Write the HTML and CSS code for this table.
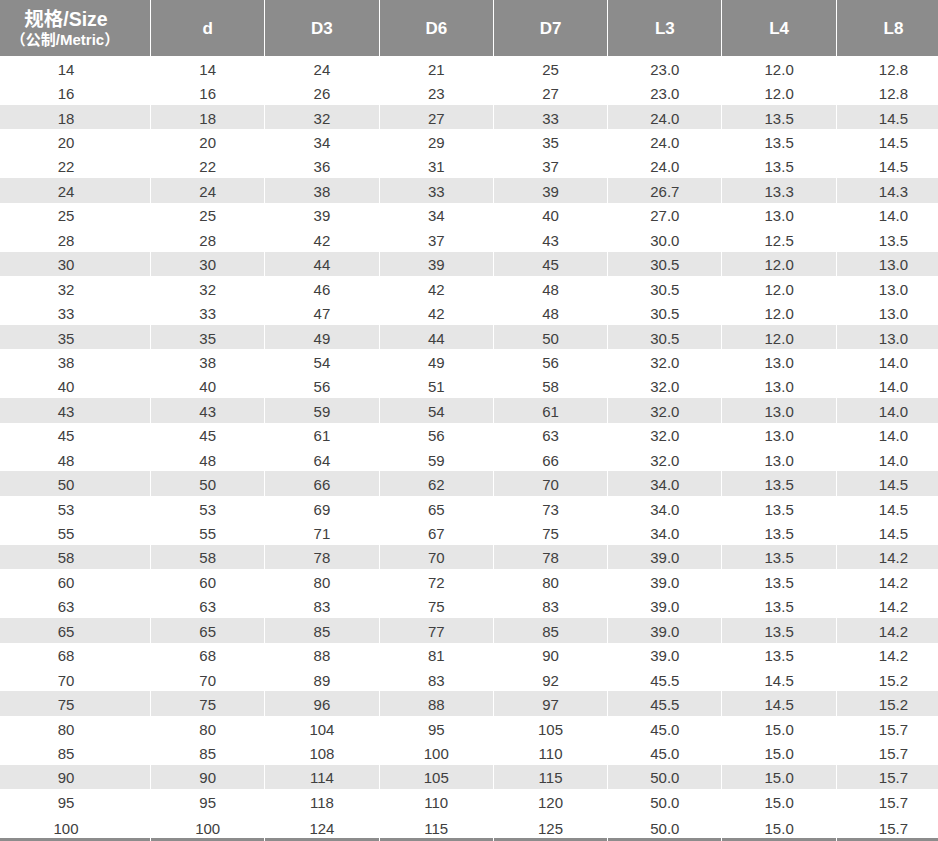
FILE: index.html
```html
<!DOCTYPE html>
<html lang="zh">
<head>
<meta charset="utf-8">
<title>规格表</title>
<link rel="stylesheet" href="styles.css">
</head>
<body>
<div class="table" id="t">
  <div class="row head">
    <div class="cell first"><span class="h1">规格/Size</span><span class="h2">（公制/Metric）</span></div>
    <div class="cell">d</div>
    <div class="cell">D3</div>
    <div class="cell">D6</div>
    <div class="cell">D7</div>
    <div class="cell">L3</div>
    <div class="cell">L4</div>
    <div class="cell">L8</div>
  </div>
</div>
<script>
var data = [
["14","14","24","21","25","23.0","12.0","12.8"],
["16","16","26","23","27","23.0","12.0","12.8"],
["18","18","32","27","33","24.0","13.5","14.5"],
["20","20","34","29","35","24.0","13.5","14.5"],
["22","22","36","31","37","24.0","13.5","14.5"],
["24","24","38","33","39","26.7","13.3","14.3"],
["25","25","39","34","40","27.0","13.0","14.0"],
["28","28","42","37","43","30.0","12.5","13.5"],
["30","30","44","39","45","30.5","12.0","13.0"],
["32","32","46","42","48","30.5","12.0","13.0"],
["33","33","47","42","48","30.5","12.0","13.0"],
["35","35","49","44","50","30.5","12.0","13.0"],
["38","38","54","49","56","32.0","13.0","14.0"],
["40","40","56","51","58","32.0","13.0","14.0"],
["43","43","59","54","61","32.0","13.0","14.0"],
["45","45","61","56","63","32.0","13.0","14.0"],
["48","48","64","59","66","32.0","13.0","14.0"],
["50","50","66","62","70","34.0","13.5","14.5"],
["53","53","69","65","73","34.0","13.5","14.5"],
["55","55","71","67","75","34.0","13.5","14.5"],
["58","58","78","70","78","39.0","13.5","14.2"],
["60","60","80","72","80","39.0","13.5","14.2"],
["63","63","83","75","83","39.0","13.5","14.2"],
["65","65","85","77","85","39.0","13.5","14.2"],
["68","68","88","81","90","39.0","13.5","14.2"],
["70","70","89","83","92","45.5","14.5","15.2"],
["75","75","96","88","97","45.5","14.5","15.2"],
["80","80","104","95","105","45.0","15.0","15.7"],
["85","85","108","100","110","45.0","15.0","15.7"],
["90","90","114","105","115","50.0","15.0","15.7"],
["95","95","118","110","120","50.0","15.0","15.7"],
["100","100","124","115","125","50.0","15.0","15.7"]
];
var t = document.getElementById('t');
data.forEach(function (r, i) {
  var row = document.createElement('div');
  row.className = 'row' + ((i % 3 === 2) ? ' band' : '') + (i === data.length - 1 ? ' last' : '');
  r.forEach(function (v, j) {
    var c = document.createElement('div');
    c.className = j === 0 ? 'cell first' : 'cell';
    c.textContent = v;
    row.appendChild(c);
  });
  t.appendChild(row);
});
</script>
</body>
</html>
```

FILE: styles.css
```css
html, body {
  margin: 0;
  padding: 0;
  background: #fff;
  overflow: hidden;
}
body {
  width: 938px;
  height: 841px;
  font-family: "Liberation Sans", Arial, "Noto Sans CJK SC", sans-serif;
  color: #404040;
}
.table {
  width: 950px;
}
.row {
  display: grid;
  grid-template-columns: 150px repeat(7, 113.3px);
  column-gap: 1px;
  background: #fff;
}
.cell {
  height: 24.45px;
  box-sizing: border-box;
  padding-top: 2px;
  display: flex;
  align-items: center;
  justify-content: center;
  font-size: 15px;
  line-height: 1;
  background: #fff;
}
.cell.first {
  padding-right: 18px;
}
.band .cell {
  background: #e6e6e6;
}
.last .cell {
  height: 27.45px;
  padding-top: 6px;
  border-bottom: 3px solid #8c8c8c;
}
.head .cell {
  height: 56px;
  background: #8c8c8c;
  color: #fff;
  font-weight: bold;
  font-size: 17px;
  padding-top: 1px;
}
.head .cell.first {
  flex-direction: column;
  gap: 2px;
  padding-top: 1px;
}
.h1 {
  font-size: 19.5px;
}
.h2 {
  font-size: 15px;
  margin-left: -2px;
}
```
